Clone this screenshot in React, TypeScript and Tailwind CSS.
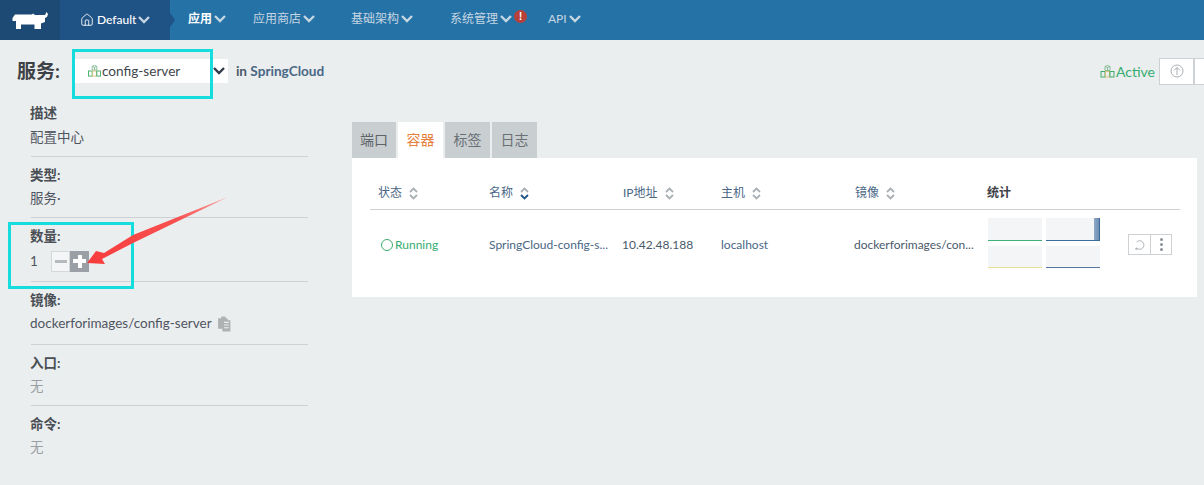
import type { ReactNode } from "react";
import { Home } from "lucide-react";

const StackIcon = ({ className }: { className?: string }) => (
  <svg viewBox="0 0 14 13" className={className} fill="none" strokeWidth="1">
    <path d="M4.5 1.5 L7 0.5 L9.5 1.5 V5.5 H4.5 Z M4.5 1.5 L7 2.5 L9.5 1.5 M7 2.5 V5.5" stroke="#86bd96" />
    <rect x="0.5" y="6.5" width="4" height="5.5" stroke="#41ac6c" />
    <rect x="5" y="6.5" width="4" height="5.5" stroke="#d7c27a" />
    <rect x="9.5" y="6.5" width="4" height="5.5" stroke="#41ac6c" />
  </svg>
);

const RancherLogo = () => (
  <svg viewBox="0 0 36 17" className="w-[36px] h-[17px]" fill="#fff">
    <path d="M0.5 6 L3 2.5 H20 L21 1.5 L23 3 H32 L33 3 L34.5 0 L36 2 L35 5 L33 6 V10 L29 11.5 V17 H22.5 V12.5 H9 V17 H4 V9 L0.5 9 Z" />
  </svg>
);

const Chevron = ({ className }: { className: string }) => (
  <svg viewBox="0 0 12 8" className={`w-[12px] h-[8px] ${className}`} fill="none" stroke="currentColor" strokeWidth="2.4">
    <path d="M1 1 L6 6 L11 1" />
  </svg>
);

const SortIcon = ({ active }: { active?: boolean }) => (
  <svg viewBox="0 0 9 13" className="w-[9px] h-[13px]" fill="none" strokeWidth="1.8">
    <path d="M1 5 L4.5 1.5 L8 5" stroke="#a9b0b5" />
    <path d="M1 8 L4.5 11.5 L8 8" stroke={active ? "#1f5285" : "#a9b0b5"} />
  </svg>
);

const NavItem = ({ label, className, active }: { label: string; className: string; active?: boolean }) => (
  <div className={`flex items-center pb-[2px] text-[12px] ${active ? "text-white font-bold" : "text-[#c5d6e3]"} ${className}`}>
    <span>{label}</span>
    <Chevron className="ml-[2px] text-[#c5d6e3]" />
  </div>
);

const Field = ({ label, children, h, first, last }: { label: string; children: ReactNode; h: string; first?: boolean; last?: boolean }) => (
  <div className={`w-[277px] ${first ? "pt-[5px]" : "pt-[6px]"} ${h} ${last ? "" : "border-b border-[#cdd1d3]"}`}>
    <div className="-ml-[1px] text-[13.5px] leading-[24px] font-bold text-[#4a4f55]">{label}</div>
    <div className={`-ml-[1px] text-[13.5px] text-[#4f5560] ${first ? "leading-[24px]" : "leading-[23px]"}`}>{children}</div>
  </div>
);

const Spark = ({ color, h, spike }: { color: string; h: string; spike?: boolean }) => (
  <div className={`relative w-[54px] bg-[#f4f5f7] ${h}`} style={{ borderBottom: `1px solid ${color}` }}>
    {spike && <div className="absolute right-0 top-0 bottom-0 w-[6px] bg-gradient-to-r from-[#8fa9c6] to-[#6e8eb3] border-r border-[#3c6a9a]" />}
  </div>
);

const columns = [
  { label: "状态", w: "w-[111px]" },
  { label: "名称", w: "w-[134px]", active: true },
  { label: "IP地址", w: "w-[98px]" },
  { label: "主机", w: "w-[134px]" },
  { label: "镜像", w: "w-[132px]" },
];

export default function App() {
  return (
    <div className="font-['Lato','Noto_Sans_CJK_SC',sans-serif] relative w-[1204px] h-[485px] overflow-hidden bg-[#ebeeef]">
      {/* top nav */}
      <div className="flex h-10 bg-[#2572a6]">
        <div className="flex w-[60px] items-center justify-center bg-[#1d4a75]">
          <RancherLogo />
        </div>
        <div className="relative flex w-[110px] items-center pl-[20px] bg-[#1f5285] text-white text-[12px] font-medium">
          <Home className="w-[14px] h-[14px] mr-[3px]" strokeWidth={1.5} />
          <span>Default</span>
          <Chevron className="ml-[2px] text-[#c5d6e3]" />
          <div className="absolute left-full top-[13px] border-y-[7px] border-l-[5px] border-y-transparent border-l-[#1f5285]" />
        </div>
        <NavItem label="应用" active className="ml-[18px] w-[65px]" />
        <NavItem label="应用商店" className="w-[98px]" />
        <NavItem label="基础架构" className="w-[99px]" />
        <div className="relative flex w-[98px] items-center pb-[2px] text-[12px] text-[#c5d6e3]">
          <span>系统管理</span>
          <Chevron className="ml-[2px] text-[#c5d6e3]" />
          <span className="absolute left-[64px] top-[10px] flex w-[13px] h-[13px] items-center justify-center rounded-full bg-[#b8403a] text-[11px] font-bold text-white">!</span>
        </div>
        <NavItem label="API" className="" />
      </div>

      {/* title row */}
      <div className="flex h-[62px] items-center pl-[17px]">
        <span className="text-[19px] font-bold text-[#3e4247]">服务:</span>
        <div className="ml-[13px] flex w-[155px] h-[24px] items-center bg-white pl-[15px] text-[13.6px] text-[#41464c]">
          <StackIcon className="w-[13px] h-[12px] mr-[1px]" />
          <span>config-server</span>
          <Chevron className="ml-auto mr-[3px] text-[#2f3b4a]" />
        </div>
        <span className="ml-[8px] text-[13.6px] font-bold text-[#4a5a6a]">in <span className="text-[#4a6785]">SpringCloud</span></span>
        <div className="ml-auto flex items-center">
          <StackIcon className="w-[15px] h-[13px] mr-[1px]" />
          <span className="text-[14px] text-[#35ad6f]">Active</span>
          <div className="ml-[4px] flex w-[35px] h-[27px] items-center justify-center border border-[#cdd1d3] bg-white">
            <svg viewBox="0 0 14 14" className="w-[14px] h-[14px]" fill="none" stroke="#a9b0b5" strokeWidth="1">
              <circle cx="7" cy="7" r="6" />
              <path d="M4 6.5 L7 3.5 L10 6.5 M7 3.5 V11" />
            </svg>
          </div>
          <div className="w-[10px] h-[27px] border-y border-l border-[#cdd1d3] bg-white" />
        </div>
      </div>

      <div className="flex">
        {/* sidebar */}
        <div className="w-[352px] -mt-[6px] pl-[31px]">
          <Field label="描述" h="h-[61px]" first>配置中心</Field>
          <Field label="类型:" h="h-[61px]">服务·</Field>
          <Field label="数量:" h="h-[64px]">
            <div className="flex items-center h-[24px] mt-[1px]">
              <span className="w-[21px] text-[#4f5560]">1</span>
              <div className="flex w-[19px] h-[21px] items-center justify-center border border-[#d5d8da] bg-[#f4f5f6]">
                <div className="w-[12px] h-[3px] bg-[#b5babd]" />
              </div>
              <div className="relative flex w-[19px] h-[21px] items-center justify-center bg-[#9aa0a5]">
                <div className="w-[13px] h-[4px] bg-white" />
                <div className="absolute w-[4px] h-[13px] bg-white" />
              </div>
            </div>
          </Field>
          <Field label="镜像:" h="h-[63px]">
            <span className="flex items-center">
              dockerforimages/config-server
              <svg viewBox="0 0 14 15" className="ml-[5px] w-[15px] h-[16px]" fill="#aeb2b3">
                <path d="M1 2 H4 V0.5 H8 V2 H10 V4 H12.5 V14.5 H5 V12 H1 Z" />
                <path d="M6.5 6 H11 M6.5 8.5 H11 M6.5 11 H11" stroke="#eceeee" strokeWidth="1" />
              </svg>
            </span>
          </Field>
          <Field label="入口:" h="h-[61px]"><span className="text-[#9a9fa3]">无</span></Field>
          <Field label="命令:" h="h-[61px]" last><span className="text-[#9a9fa3]">无</span></Field>
        </div>

        {/* right panel */}
        <div className="w-[845px] pt-[20px]">
          <div className="flex gap-[2px]">
            <div className="flex w-[44px] h-[36px] items-center justify-center pb-[2px] bg-[#c9ced0] text-[14px] text-[#5d6469]">端口</div>
            <div className="flex w-[45px] h-[36px] items-center justify-center pb-[2px] bg-white text-[14px] text-[#e5813c]">容器</div>
            <div className="flex w-[45px] h-[36px] items-center justify-center pb-[2px] bg-[#c9ced0] text-[14px] text-[#6a7176]">标签</div>
            <div className="flex w-[45px] h-[36px] items-center justify-center pb-[2px] bg-[#c9ced0] text-[14px] text-[#6a7176]">日志</div>
          </div>
          <div className="h-[139px] bg-white pl-[18px]">
            <div className="flex w-[810px] h-[52px] items-end pb-[8px] border-b border-[#cdd1d3] pl-[8px] text-[12px] leading-[16px] text-[#4a6785]">
              {columns.map((c) => (
                <div key={c.label} className={`flex items-center gap-[7px] ${c.w}`}>
                  <span>{c.label}</span>
                  <SortIcon active={c.active} />
                </div>
              ))}
              <span className="font-bold text-[#3e4247]">统计</span>
            </div>
            <div className="flex h-[70px] items-center pl-[11px] text-[12px] text-[#4a6785]">
              <div className="flex w-[108px] items-center text-[#35ad6f]">
                <span className="w-[12px] h-[12px] rounded-full border border-[#41ac6c] mr-[2px]" />
                Running
              </div>
              <div className="w-[133px] truncate pr-[2px]">SpringCloud-config-s...</div>
              <div className="w-[99px] text-[#4a5a6a]">10.42.48.188</div>
              <div className="w-[133px]">localhost</div>
              <div className="w-[134px] text-[#4a5a6a]">dockerforimages/con...</div>
              <div className="grid grid-cols-[54px_54px] gap-x-[4px] gap-y-[5px] mb-[4px]">
                <Spark color="#3fb27a" h="h-[23px]" />
                <Spark color="#3c6a9a" h="h-[23px]" spike />
                <Spark color="#e6dd96" h="h-[22px]" />
                <Spark color="#54779b" h="h-[22px]" />
              </div>
              <div className="ml-[28px] mb-[1px] flex h-[21px]">
                <div className="flex w-[23px] items-center justify-center border border-[#cdd1d3]">
                  <svg viewBox="0 0 14 14" className="w-[12px] h-[12px]" fill="none" stroke="#a2a8ac" strokeWidth="1">
                    <path d="M3 3.5 A5 5 0 1 1 3 10.5 M3 10.5 L1 12 M3 10.5 L3.5 13" />
                  </svg>
                </div>
                <div className="flex w-[21px] flex-col items-center justify-center gap-[2px] border-y border-r border-[#cdd1d3]">
                  <span className="w-[3px] h-[3px] rounded-full bg-[#8a9096]" />
                  <span className="w-[3px] h-[3px] rounded-full bg-[#8a9096]" />
                  <span className="w-[3px] h-[3px] rounded-full bg-[#8a9096]" />
                </div>
              </div>
            </div>
          </div>
        </div>
      </div>

      {/* screenshot annotations */}
      <div className="absolute left-[72px] top-[49px] w-[141px] h-[50px] border-[3px] border-[#16dddd]" />
      <div className="absolute left-[8px] top-[222px] w-[126px] h-[67px] border-[3px] border-[#16dddd]" />
      <svg className="absolute left-[85px] top-[195px] w-[145px] h-[80px]" viewBox="0 0 145 80">
        <defs>
          <linearGradient id="arrowFade" x1="1" y1="0" x2="0" y2="1">
            <stop offset="0" stopColor="#f9a0a0" />
            <stop offset="0.35" stopColor="#f85050" />
            <stop offset="1" stopColor="#f83c3c" />
          </linearGradient>
        </defs>
        <path d="M143 2 L48 40 L19 58 L11 56 L2 68 L20 69 L17 64 L48 48 Z" fill="url(#arrowFade)" />
      </svg>
    </div>
  );
}
